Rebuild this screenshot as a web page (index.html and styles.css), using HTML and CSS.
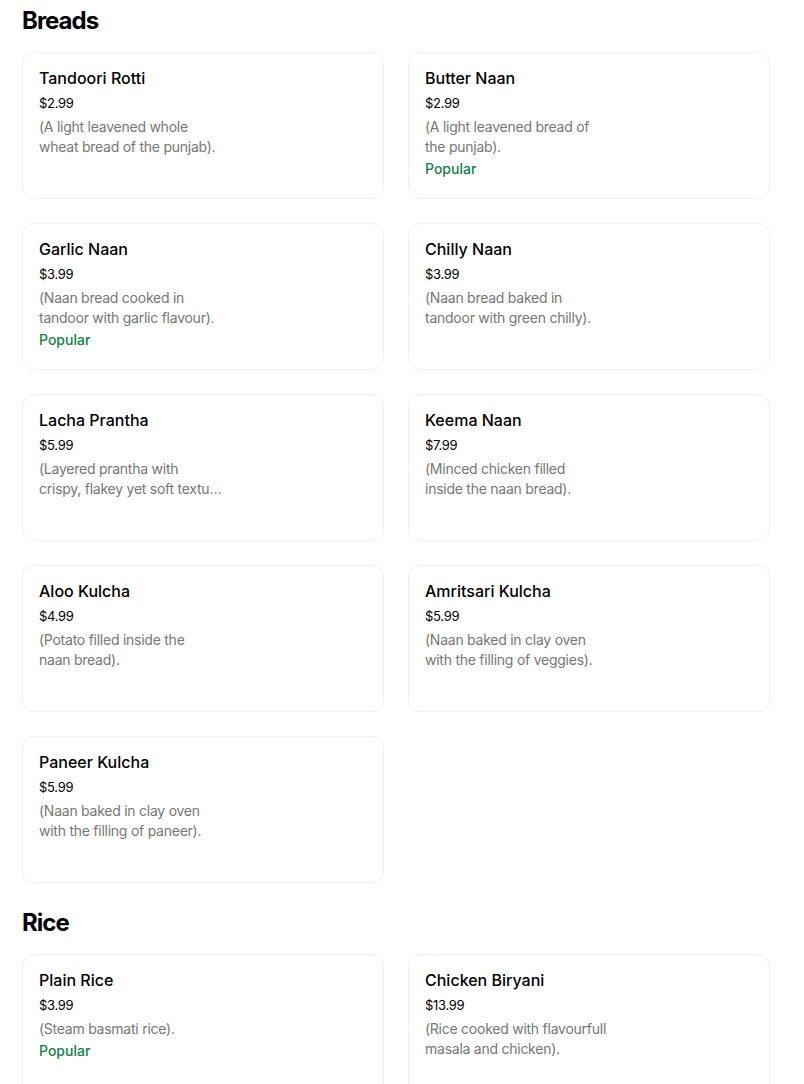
FILE: index.html
```html
<!DOCTYPE html>
<html>
<head>
<meta charset="utf-8">
<link rel="stylesheet" href="styles.css">
</head>
<body>
<main class="menu">
  <section class="section">
    <h2 class="section-title">Breads</h2>
    <div class="grid">
      <div class="card">
        <div class="name">Tandoori Rotti</div>
        <div class="price">$2.99</div>
        <div class="desc">(A light leavened whole wheat bread of the punjab).</div>
      </div>
      <div class="card">
        <div class="name">Butter Naan</div>
        <div class="price">$2.99</div>
        <div class="desc">(A light leavened bread of the punjab).</div>
        <div class="popular">Popular</div>
      </div>
      <div class="card">
        <div class="name">Garlic Naan</div>
        <div class="price">$3.99</div>
        <div class="desc">(Naan bread cooked in tandoor with garlic flavour).</div>
        <div class="popular">Popular</div>
      </div>
      <div class="card">
        <div class="name">Chilly Naan</div>
        <div class="price">$3.99</div>
        <div class="desc">(Naan bread baked in tandoor with green chilly).</div>
      </div>
      <div class="card">
        <div class="name">Lacha Prantha</div>
        <div class="price">$5.99</div>
        <div class="desc">(Layered prantha with crispy, flakey yet soft textu…</div>
      </div>
      <div class="card">
        <div class="name">Keema Naan</div>
        <div class="price">$7.99</div>
        <div class="desc">(Minced chicken filled inside&nbsp;the naan bread).</div>
      </div>
      <div class="card">
        <div class="name">Aloo Kulcha</div>
        <div class="price">$4.99</div>
        <div class="desc">(Potato filled inside the naan&nbsp;bread).</div>
      </div>
      <div class="card">
        <div class="name">Amritsari Kulcha</div>
        <div class="price">$5.99</div>
        <div class="desc">(Naan baked in clay oven with the filling of veggies).</div>
      </div>
      <div class="card">
        <div class="name">Paneer Kulcha</div>
        <div class="price">$5.99</div>
        <div class="desc">(Naan baked in clay oven with the filling of paneer).</div>
      </div>
    </div>
  </section>
  <section class="section">
    <h2 class="section-title">Rice</h2>
    <div class="grid">
      <div class="card">
        <div class="name">Plain Rice</div>
        <div class="price">$3.99</div>
        <div class="desc">(Steam basmati rice).</div>
        <div class="popular">Popular</div>
      </div>
      <div class="card">
        <div class="name">Chicken Biryani</div>
        <div class="price">$13.99</div>
        <div class="desc">(Rice cooked with flavourfull masala and chicken).</div>
      </div>
    </div>
  </section>
</main>
</body>
</html>
```
FILE: styles.css
```css
* { box-sizing: border-box; }
html, body { margin: 0; padding: 0; background: #fff; }
body {
  font-family: Inter, "Liberation Sans", sans-serif;
  color: #000;
}
.menu {
  width: 770px;
  padding: 5px 0 0 22px;
}
.section { margin-bottom: 24px; }
.section-title {
  margin: 0 0 15px;
  font-size: 24px;
  line-height: 32px;
  font-weight: 700;
  letter-spacing: -1px;
}
.grid {
  display: grid;
  grid-template-columns: 362px 362px;
  column-gap: 24px;
  row-gap: 24px;
}
.card {
  height: 147px;
  border: 1px solid #f0f0f0;
  border-radius: 12px;
  padding: 15px 16px;
}
.name {
  font-size: 16px;
  line-height: 20px;
  font-weight: 500;
}
.price {
  margin-top: 5px;
  font-size: 13px;
  line-height: 20px;
  letter-spacing: -0.3px;
}
.desc {
  margin-top: 4px;
  width: 184px;
  font-size: 14px;
  line-height: 20px;
  letter-spacing: -0.25px;
  color: #767676;
}
.popular {
  margin-top: 2px;
  font-size: 14px;
  line-height: 20px;
  font-weight: 500;
  color: #0e8345;
}
```
